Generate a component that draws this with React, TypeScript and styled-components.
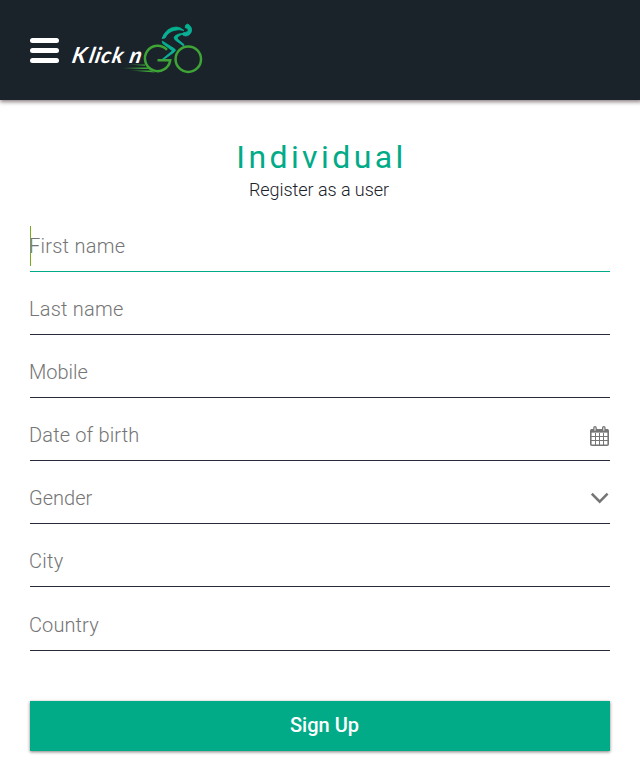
import React from "react";
import styled, { createGlobalStyle } from "styled-components";

const GlobalStyle = createGlobalStyle`
  * { box-sizing: border-box; }
  body { margin: 0; background: #fff; font-family: Roboto, "Noto Sans", sans-serif; }
`;

const Page = styled.div`
  height: 782px;
  overflow: hidden;
  background: #fff;
`;

const Header = styled.header`
  height: 100px;
  padding: 20px 30px;
  display: flex;
  align-items: flex-start;
  gap: 11px;
  background: #1a222a;
  box-shadow: 1px 1px 4px 1px rgba(45, 25, 30, 0.55);
`;

const MenuButton = styled.button`
  width: 29px;
  height: 25px;
  margin: 18px 0 0;
  padding: 0;
  border: 0;
  background: none;
  display: flex;
  flex-direction: column;
  justify-content: space-between;
`;

const MenuBar = styled.span`
  height: 5px;
  border-radius: 2.5px;
  background: #fff;
`;

const LogoArt = styled.svg`
  width: 134px;
  height: 56px;
  display: block;
`;

const LogoWord = styled.text`
  font-family: Lato, sans-serif;
  font-size: 22px;
  font-weight: 700;
  font-style: italic;
  fill: #fff;
`;

const Form = styled.form`
  padding: 37px 30px 0;
  display: flex;
  flex-direction: column;
`;

const Title = styled.h1`
  margin: 0;
  padding-left: 3px;
  font-size: 32px;
  line-height: 40px;
  font-weight: 400;
  letter-spacing: 3.4px;
  text-align: center;
  color: #02ab88;
`;

const Subtitle = styled.p`
  margin: 0 0 15px;
  padding-right: 2px;
  font-size: 18px;
  line-height: 25px;
  font-weight: 300;
  letter-spacing: -0.05px;
  text-align: center;
  color: #1a222a;
`;

const Field = styled.div<{ $focused?: boolean; $height?: number }>`
  height: ${(p) => p.$height ?? 63}px;
  padding: 0 1px 5px 0;
  display: flex;
  align-items: flex-end;
  justify-content: space-between;
  border-bottom: 1px solid ${(p) => (p.$focused ? "#02ab88" : "#282b39")};
  color: #757575;
`;

const Entry = styled.div<{ $focused?: boolean }>`
  height: 40px;
  display: flex;
  align-items: center;
  box-shadow: ${(p) => (p.$focused ? "inset 1px 0 #76ad18" : "none")};
`;

const Label = styled.span<{ $tracking?: number }>`
  margin-left: -1px;
  font-size: 20px;
  line-height: 40px;
  font-weight: 300;
  letter-spacing: ${(p) => p.$tracking ?? 0}px;
`;

const IconSlot = styled.span`
  height: 40px;
  display: flex;
  align-items: center;
`;

const CalendarArt = styled.svg`
  width: 19px;
  height: 20px;
  margin-top: 2px;
`;

const Chevron = styled.svg`
  width: 18px;
  height: 12px;
`;

const Submit = styled.button`
  height: 50px;
  margin: 50px 0 0;
  padding: 0 0 1px 9px;
  border: 0;
  background: #02ab88;
  color: #fff;
  font: 500 20px/49px Roboto, sans-serif;
  box-shadow: 0 1px 3px rgba(0, 0, 0, 0.5);
`;

const Calendar = () => (
  <CalendarArt viewBox="0 0 19 20" fill="none" stroke="#757575">
    <rect x="0.8" y="3.8" width="17.4" height="15.4" rx="1" strokeWidth="1.6" />
    <path d="M1 4.9H18" strokeWidth="3.5" />
    <path d="M5.5 7V19M9.5 7V19M13.5 7V19M1 10.5H18M1 14.5H18" strokeWidth="1" />
    <path d="M5 1.8V4M13.8 1.8V4" strokeWidth="3.6" strokeLinecap="round" />
    <path d="M5 1.8V4.2M13.8 1.8V4.2" stroke="#eee" strokeWidth="1.1" strokeLinecap="round" />
  </CalendarArt>
);

const Logo = () => (
  <LogoArt viewBox="70 20 134 56" role="img" aria-label="Klick n Go">
    <defs>
      <linearGradient id="rider" x1="0" y1="0" x2="0" y2="1">
        <stop offset="0" stopColor="#00b28c" />
        <stop offset="1" stopColor="#0fae9a" />
      </linearGradient>
      <linearGradient id="speed" x1="0" x2="1">
        <stop offset="0" stopColor="#3da536" stopOpacity="0" />
        <stop offset="0.65" stopColor="#3da536" />
      </linearGradient>
    </defs>
    <g transform="translate(71 63) skewX(-12)">
      <LogoWord x="0 17 23 29 40 57.5" y="0">Klickn</LogoWord>
    </g>
    <g fill="none" stroke="#3ea435" strokeWidth="2.5">
      <path d="M167 49.8A12.7 12.7 0 1 0 170.2 60.2H157.5" />
      <circle cx="188.3" cy="59.2" r="12.7" />
    </g>
    <path d="M127 64.4H145V65.8ZM123 67.4H147L149 69H123ZM130 70.5H151L155 72.5Z" fill="url(#speed)" />
    <g fill="url(#rider)" stroke="url(#rider)" strokeWidth="0.8">
      <path d="M162 38.5Q166 27.5 176 27Q180 26.7 184 30.5Q179 28.8 174 30.5Q168 32 165 38Z" />
      <path d="M187.8 24C191 26 192.5 29 191 32.5C189 36.5 184 37 181.8 34C183.5 31.5 187 33.5 188 30.5C188.5 28.8 187 28.2 185.2 27.7L185.5 25.2Z" />
      <path d="M183 33.5L177.8 36.8Q176.5 38 178 39.5L184 44.5L183.7 46L175.5 40.2Q172.5 37.8 175.5 35.5Q179 33.3 183 33.5Z" />
      <path d="M162.2 41L174.5 48.8Q176.7 50.2 174 52.2L165.5 58.3L162.5 59L172.4 50.8L162.7 43.5Z" />
    </g>
  </LogoArt>
);

const fields = [
  { label: "First name", focused: true, height: 55, tracking: 0.25 },
  { label: "Last name", tracking: 0.22 },
  { label: "Mobile" },
  { label: "Date of birth", tracking: 0.15, icon: <Calendar /> },
  {
    label: "Gender",
    icon: (
      <Chevron viewBox="0 0 18 12" fill="none" stroke="#757575" strokeWidth="2.5">
        <path d="M0.8 1.7L8.7 9.7L16.6 1.7" />
      </Chevron>
    ),
  },
  { label: "City", tracking: 0.3 },
  { label: "Country", height: 64, tracking: 0.1 },
];

export default function App() {
  return (
    <Page>
      <GlobalStyle />
      <Header>
        <MenuButton type="button" aria-label="Menu">
          <MenuBar />
          <MenuBar />
          <MenuBar />
        </MenuButton>
        <Logo />
      </Header>
      <Form>
        <Title>Individual</Title>
        <Subtitle>Register as a user</Subtitle>
        {fields.map((field) => (
          <Field key={field.label} $focused={field.focused} $height={field.height}>
            <Entry $focused={field.focused}>
              <Label $tracking={field.tracking}>{field.label}</Label>
            </Entry>
            {field.icon && <IconSlot>{field.icon}</IconSlot>}
          </Field>
        ))}
        <Submit type="button">Sign Up</Submit>
      </Form>
    </Page>
  );
}
